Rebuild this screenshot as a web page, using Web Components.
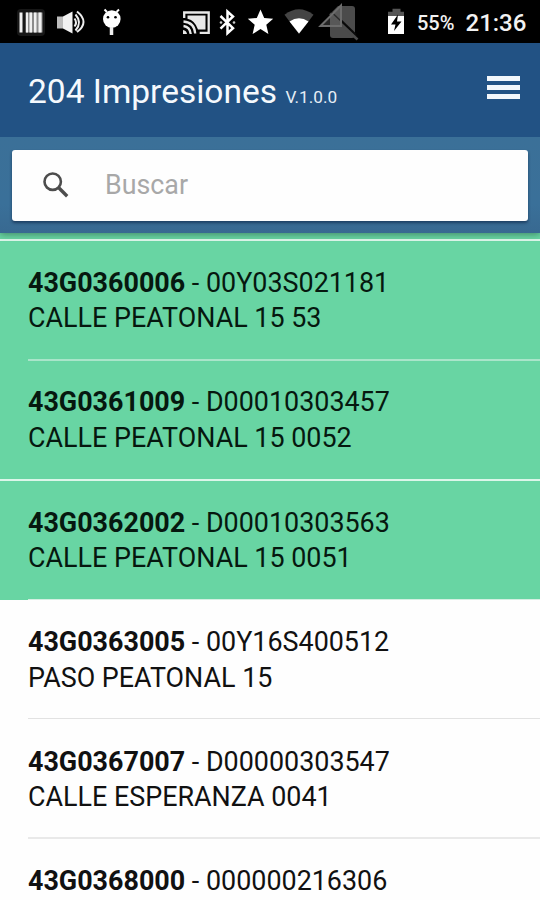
<!DOCTYPE html>
<html lang="es">
<head>
<meta charset="utf-8">
<meta name="viewport" content="width=device-width, initial-scale=1">
<title>204 Impresiones</title>
<style>
    body {
        margin: 0;
        height: 900px;
        overflow: hidden;
        background: #fefefe;
        font-family: Roboto, "Liberation Sans", sans-serif;
    }
</style>
</head>
<body>
<app-page>
    <status-bar slot="header" battery="55%" time="21:36"></status-bar>
    <app-toolbar slot="header">204 Impresiones<span slot="version">V.1.0.0</span></app-toolbar>
    <search-bar slot="header" placeholder="Buscar"></search-bar>

    <list-item printed last style="--height: 8px"></list-item>
    <list-item printed code="43G0360006" meter="00Y03S021181" style="--top: 25px">CALLE PEATONAL 15 53</list-item>
    <list-item printed last code="43G0361009" meter="D00010303457" style="--top: 23px; --pitch: 36px">CALLE PEATONAL 15 0052</list-item>
    <list-item printed code="43G0362002" meter="D00010303563" style="--height: 119px; --top: 25px; --line: #d5efe2; --line-size: 1px">CALLE PEATONAL 15 0051</list-item>
    <list-item code="43G0363005" meter="00Y16S400512" style="--height: 119px; --pitch: 36px; --line-size: 1px; --line: #e2e2e2">PASO PEATONAL 15</list-item>
    <list-item code="43G0367007" meter="D00000303547" style="--top: 26px">CALLE ESPERANZA 0041</list-item>
    <list-item code="43G0368000" meter="000000216306" style="--top: 25px"></list-item>
</app-page>

<script>
class AppPage extends HTMLElement {
    constructor() {
        super();
        this.attachShadow({ mode: "open" });
        this.shadowRoot.innerHTML = `
            <style>
                :host {
                    display: flex;
                    flex-direction: column;
                    width: 540px;
                    height: 900px;
                    overflow: hidden;
                }

                header {
                    flex: none;
                    position: relative;
                    box-shadow: 0 1px 7px rgba(0, 0, 0, 0.4);
                    z-index: 1;
                }

                main {
                    flex: 1;
                    min-height: 0;
                    overflow: hidden;
                }
            </style>
            <header><slot name="header"></slot></header>
            <main><slot></slot></main>
        `;
    }
}

class StatusBar extends HTMLElement {
    constructor() {
        super();
        this.attachShadow({ mode: "open" });

        const battery = this.getAttribute("battery");
        const time = this.getAttribute("time");

        this.shadowRoot.innerHTML = `
            <style>
                :host {
                    display: flex;
                    align-items: center;
                    height: 43px;
                    background: #000;
                    color: #f2f2f2;
                }

                svg {
                    display: block;
                    flex: none;
                }

                .battery {
                    width: 38px;
                    margin-left: 13px;
                    font-size: 20px;
                    font-weight: 500;
                    line-height: 43px;
                    padding-top: 3px;
                }

                .time {
                    margin-left: 10.5px;
                    font-size: 24px;
                    font-weight: 500;
                    line-height: 43px;
                    padding-top: 3px;
                }
            </style>

            <svg width="404" height="43" viewBox="0 0 404 43">
                <!-- barcode -->
                <rect x="17" y="9" width="28" height="27" rx="4" fill="#171717"/>
                <path fill="#8c8c8c" d="M25.500 12.500h17v20h-17z"/>
                <path fill="#f0f0f0" d="M19.500 12.500h3v20h-3zM26 12.500h2v20h-2zM29.500 12.500h2.500v20h-2.500zM34 12.500h2.500v20H34zM38.500 12.500h3v20h-3z"/>
                <!-- speaker -->
                <path fill="#bdbdbd" d="M57 16.500h6v12h-6z"/>
                <path fill="#f2f2f2" d="M63 16.500l9.500-5v22l-9.500-5z"/>
                <path fill="none" stroke="#eee" stroke-width="2" d="M74.500 18.500q3 4 0 8M75.500 14.500q7 8 0 16M77 11.500q13 10.500 0 20.500"/>
                <!-- debug head -->
                <circle cx="111.800" cy="19" r="8.800" fill="#fff"/>
                <path stroke="#fff" stroke-width="2" d="M107 12l-2.500-2.500M116.500 12l2.500-2.500"/>
                <path stroke="#eee" stroke-width="3.500" d="M111.500 27v8"/>
                <circle cx="108" cy="17.300" r="1.300"/><circle cx="115.500" cy="17.300" r="1.300"/>
                <!-- cast -->
                <path fill="none" stroke="#e8e8e8" stroke-width="2.300" d="M184.200 18v-5.500h24.500v20.300h-9M183.500 21.500q11 1 11.700 12M183.500 26q6.500.8 7.200 8"/>
                <path fill="#e8e8e8" d="M187.500 15.500h18v14h-7.500q-3-9-10.500-10.700zM183 30q3.500.5 4 4h-4z"/>
                <!-- bluetooth -->
                <path fill="none" stroke="#fff" stroke-width="2.500" d="M220.500 16l12.500 12.200-5.500 5V11.500l5.500 5-12.500 12.200"/>
                <circle cx="221" cy="22.500" r="1.300" fill="#ccc"/><circle cx="234" cy="22.500" r="1.300" fill="#ccc"/>
                <!-- star -->
                <path fill="#fff" d="M260.500 9.500l3.700 8.400 9 .8-6.900 6 2.100 9.300-7.900-4.900-7.900 4.900 2.100-9.300-6.900-6 9-.8z"/>
                <!-- wifi -->
                <path fill="#444" d="M284.500 14.800q14.500-11 29 0L299 34z"/>
                <path fill="#fff" d="M289.500 21.500q9.500-6.500 19 0L299 33.500z"/>
                <!-- no sim, no signal -->
                <path fill="#4b4b4b" d="M338 6h14q3 0 3 3v26q0 3-3 3h-19q-3 0-3-3V14z"/>
                <path stroke="#0a0a0a" stroke-width="2.200" d="M332 13l24 23"/>
                <path stroke="#4b4b4b" stroke-width="2.500" d="M330 13.500l27.500 26"/>
                <path stroke="#0a0a0a" stroke-width="1.600" d="M341 20l15 14.500"/>
                <path fill="#777" fill-opacity=".3" stroke="#6c6c6c" stroke-width="2" d="M320.500 26L341 5.500V26z"/>
                <!-- battery -->
                <path fill="#555" d="M392.500 8.800h8v3h4v5h-16.500v-5h4.500z"/>
                <path fill="#fff" d="M388 16h16.500v18H388z"/>
                <path d="M398 14.500l-7 10h4.500l-1.500 6.500 7.500-9.500H397z"/>
            </svg>
            <span class="battery">${battery}</span>
            <span class="time">${time}</span>
        `;
    }
}

class AppToolbar extends HTMLElement {
    constructor() {
        super();
        this.attachShadow({ mode: "open" });
        this.shadowRoot.innerHTML = `
            <style>
                :host {
                    display: flex;
                    justify-content: space-between;
                    box-sizing: border-box;
                    height: 94px;
                    padding: 0 20px 0 28px;
                    background: #225284;
                    color: #f5f9fd;
                }

                h1 {
                    margin: 0;
                    font-size: 33.5px;
                    font-weight: 400;
                    line-height: 97px;
                    white-space: nowrap;
                }

                small {
                    margin-left: 8.5px;
                    font-size: 17.2px;
                    color: #e6eef6;
                }

                .menu {
                    display: flex;
                    flex-direction: column;
                    gap: 4px;
                    width: 33px;
                    padding-top: 33px;
                }

                .menu i {
                    height: 5px;
                    background: #f3f7fb;
                }
            </style>
            <h1><slot></slot><small><slot name="version"></slot></small></h1>
            <div class="menu"><i></i><i></i><i></i></div>
        `;
    }
}

class SearchBar extends HTMLElement {
    constructor() {
        super();
        this.attachShadow({ mode: "open" });

        const placeholder = this.getAttribute("placeholder");

        this.shadowRoot.innerHTML = `
            <style>
                :host {
                    display: block;
                    box-sizing: border-box;
                    height: 96px;
                    padding: 12.5px 12px;
                    background: linear-gradient(#3b7098, #3a7099 70%, #386991);
                }

                .field {
                    display: flex;
                    align-items: center;
                    height: 71px;
                    border-radius: 3px;
                    background: #fefefe;
                    box-shadow: 0 2px 3px rgba(0, 20, 50, 0.5);
                    color: #a8a8a8;
                    font-size: 26.8px;
                }

                svg {
                    margin: 0 36px 0 31px;
                }

                span {
                    padding-bottom: 1px;
                }
            </style>
            <div class="field">
                <svg width="26" height="26" viewBox="0 0 26 26" fill="none" stroke="#4d4d4d">
                    <circle cx="9.700" cy="9.700" r="8.200" stroke-width="2.600"/>
                    <path d="M15.500 15.500l8.700 8.700" stroke-width="3.400"/>
                </svg>
                <span>${placeholder}</span>
            </div>
        `;
    }
}

class ListItem extends HTMLElement {
    constructor() {
        super();
        this.attachShadow({ mode: "open" });

        const code = this.getAttribute("code");
        const meter = this.getAttribute("meter");

        this.shadowRoot.innerHTML = `
            <style>
                :host {
                    display: block;
                    box-sizing: border-box;
                    height: var(--height, 120px);
                    padding-left: 28px;
                    background: #fefefe;
                    color: #111;
                    overflow: hidden;
                }

                :host([printed]) {
                    --line: #a9e5ca;
                    background: #68d5a3;
                    color: #06180f;
                }

                /* end of a group: the line runs over the full width */
                :host([last]) {
                    --line: #dcf6ea;
                    padding-left: 0;
                }

                :host([last]) .text {
                    padding-left: 28px;
                }

                .inner {
                    box-sizing: border-box;
                    height: 100%;
                    border-bottom: var(--line-size, 2px) solid var(--line, #e9e9e9);
                }

                .text {
                    padding-top: var(--top, 24px);
                    font-size: 26.9px;
                    line-height: var(--pitch, 35px);
                    white-space: nowrap;
                }

                b {
                    font-weight: 700;
                }
            </style>
            <div class="inner">
                ${code ? `<div class="text"><div><b>${code}</b> - ${meter}</div><div><slot></slot></div></div>` : ""}
            </div>
        `;
    }
}

customElements.define("app-page", AppPage);
customElements.define("status-bar", StatusBar);
customElements.define("app-toolbar", AppToolbar);
customElements.define("search-bar", SearchBar);
customElements.define("list-item", ListItem);
</script>
</body>
</html>
